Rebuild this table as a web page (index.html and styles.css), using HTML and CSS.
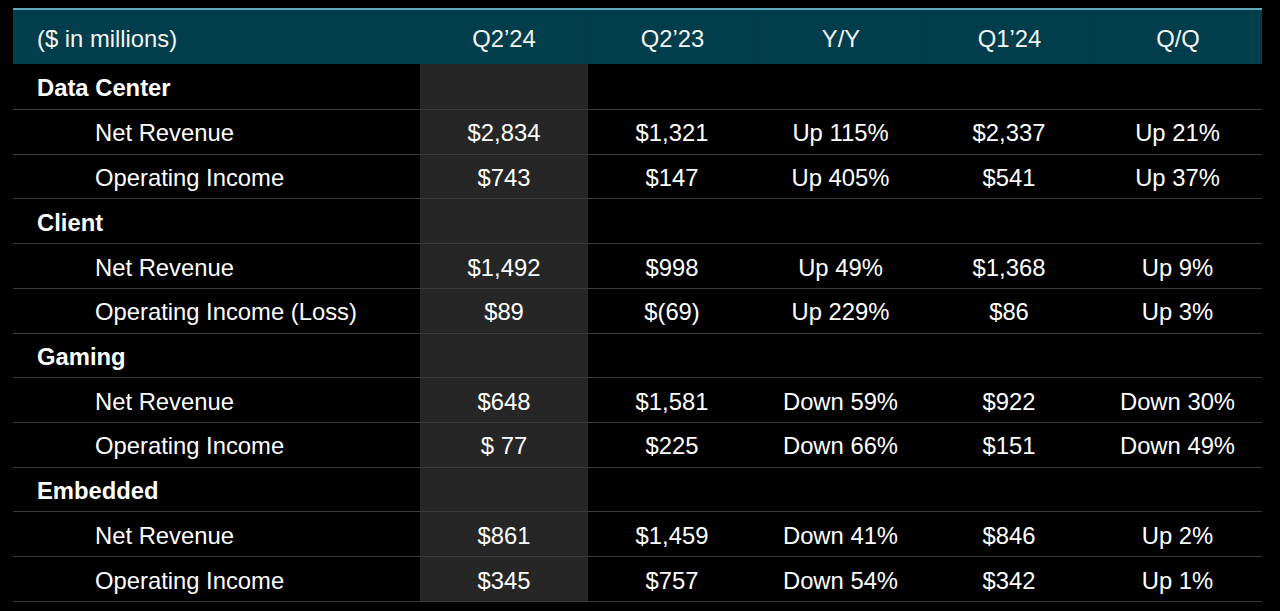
FILE: index.html
```html
<!DOCTYPE html>
<html>
<head>
<meta charset="utf-8">
<link rel="stylesheet" href="styles.css">
</head>
<body>
<div class="table">
  <div class="row head">
    <div class="cell label">($ in millions)</div>
    <div class="cell">Q2’24</div>
    <div class="cell">Q2’23</div>
    <div class="cell">Y/Y</div>
    <div class="cell">Q1’24</div>
    <div class="cell">Q/Q</div>
  </div>

  <div class="row section first">
    <div class="cell label">Data Center</div>
    <div class="cell hl"></div><div class="cell"></div><div class="cell"></div><div class="cell"></div><div class="cell"></div>
  </div>
  <div class="row">
    <div class="cell label sub">Net Revenue</div>
    <div class="cell hl">$2,834</div><div class="cell">$1,321</div><div class="cell">Up 115%</div><div class="cell">$2,337</div><div class="cell">Up 21%</div>
  </div>
  <div class="row">
    <div class="cell label sub">Operating Income</div>
    <div class="cell hl">$743</div><div class="cell">$147</div><div class="cell">Up 405%</div><div class="cell">$541</div><div class="cell">Up 37%</div>
  </div>

  <div class="row section">
    <div class="cell label">Client</div>
    <div class="cell hl"></div><div class="cell"></div><div class="cell"></div><div class="cell"></div><div class="cell"></div>
  </div>
  <div class="row">
    <div class="cell label sub">Net Revenue</div>
    <div class="cell hl">$1,492</div><div class="cell">$998</div><div class="cell">Up 49%</div><div class="cell">$1,368</div><div class="cell">Up 9%</div>
  </div>
  <div class="row">
    <div class="cell label sub">Operating Income (Loss)</div>
    <div class="cell hl">$89</div><div class="cell">$(69)</div><div class="cell">Up 229%</div><div class="cell">$86</div><div class="cell">Up 3%</div>
  </div>

  <div class="row section">
    <div class="cell label">Gaming</div>
    <div class="cell hl"></div><div class="cell"></div><div class="cell"></div><div class="cell"></div><div class="cell"></div>
  </div>
  <div class="row">
    <div class="cell label sub">Net Revenue</div>
    <div class="cell hl">$648</div><div class="cell">$1,581</div><div class="cell">Down 59%</div><div class="cell">$922</div><div class="cell">Down 30%</div>
  </div>
  <div class="row">
    <div class="cell label sub">Operating Income</div>
    <div class="cell hl">$ 77</div><div class="cell">$225</div><div class="cell">Down 66%</div><div class="cell">$151</div><div class="cell">Down 49%</div>
  </div>

  <div class="row section">
    <div class="cell label">Embedded</div>
    <div class="cell hl"></div><div class="cell"></div><div class="cell"></div><div class="cell"></div><div class="cell"></div>
  </div>
  <div class="row">
    <div class="cell label sub">Net Revenue</div>
    <div class="cell hl">$861</div><div class="cell">$1,459</div><div class="cell">Down 41%</div><div class="cell">$846</div><div class="cell">Up 2%</div>
  </div>
  <div class="row">
    <div class="cell label sub">Operating Income</div>
    <div class="cell hl">$345</div><div class="cell">$757</div><div class="cell">Down 54%</div><div class="cell">$342</div><div class="cell">Up 1%</div>
  </div>
</div>
</body>
</html>
```

FILE: styles.css
```css
html, body {
  margin: 0;
  padding: 0;
  background: #000;
}
body {
  font-family: "Liberation Sans", Arial, sans-serif;
  color: #fff;
  font-size: 23.8px;
  height: 611px;
  overflow: hidden;
}
.table {
  width: 1249px;
  margin: 8px 0 0 13px;
}
.row {
  display: grid;
  grid-template-columns: 407px 168px 168px 169px 168px 169px;
  height: 44.73px;
  box-sizing: border-box;
  border-bottom: 1px solid #3a3a3a;
}
.row.first {
  height: 46px;
}
.cell {
  display: flex;
  align-items: center;
  justify-content: center;
  padding-top: 3px;
  white-space: nowrap;
}
.cell.label {
  justify-content: flex-start;
  padding-left: 24px;
}
.cell.label.sub {
  padding-left: 82px;
}
.section .label {
  font-weight: bold;
}
.hl {
  background: #262626;
}
.row.head {
  height: 56px;
  background: #023d4b;
  border-top: 2px solid #5fa9ba;
  border-bottom: none;
  color: #f4f6f6;
}
.row.head .cell {
  padding-top: 3px;
}
.row.head .cell + .cell + .cell {
  border-left: 1px solid #053a46;
}
```
